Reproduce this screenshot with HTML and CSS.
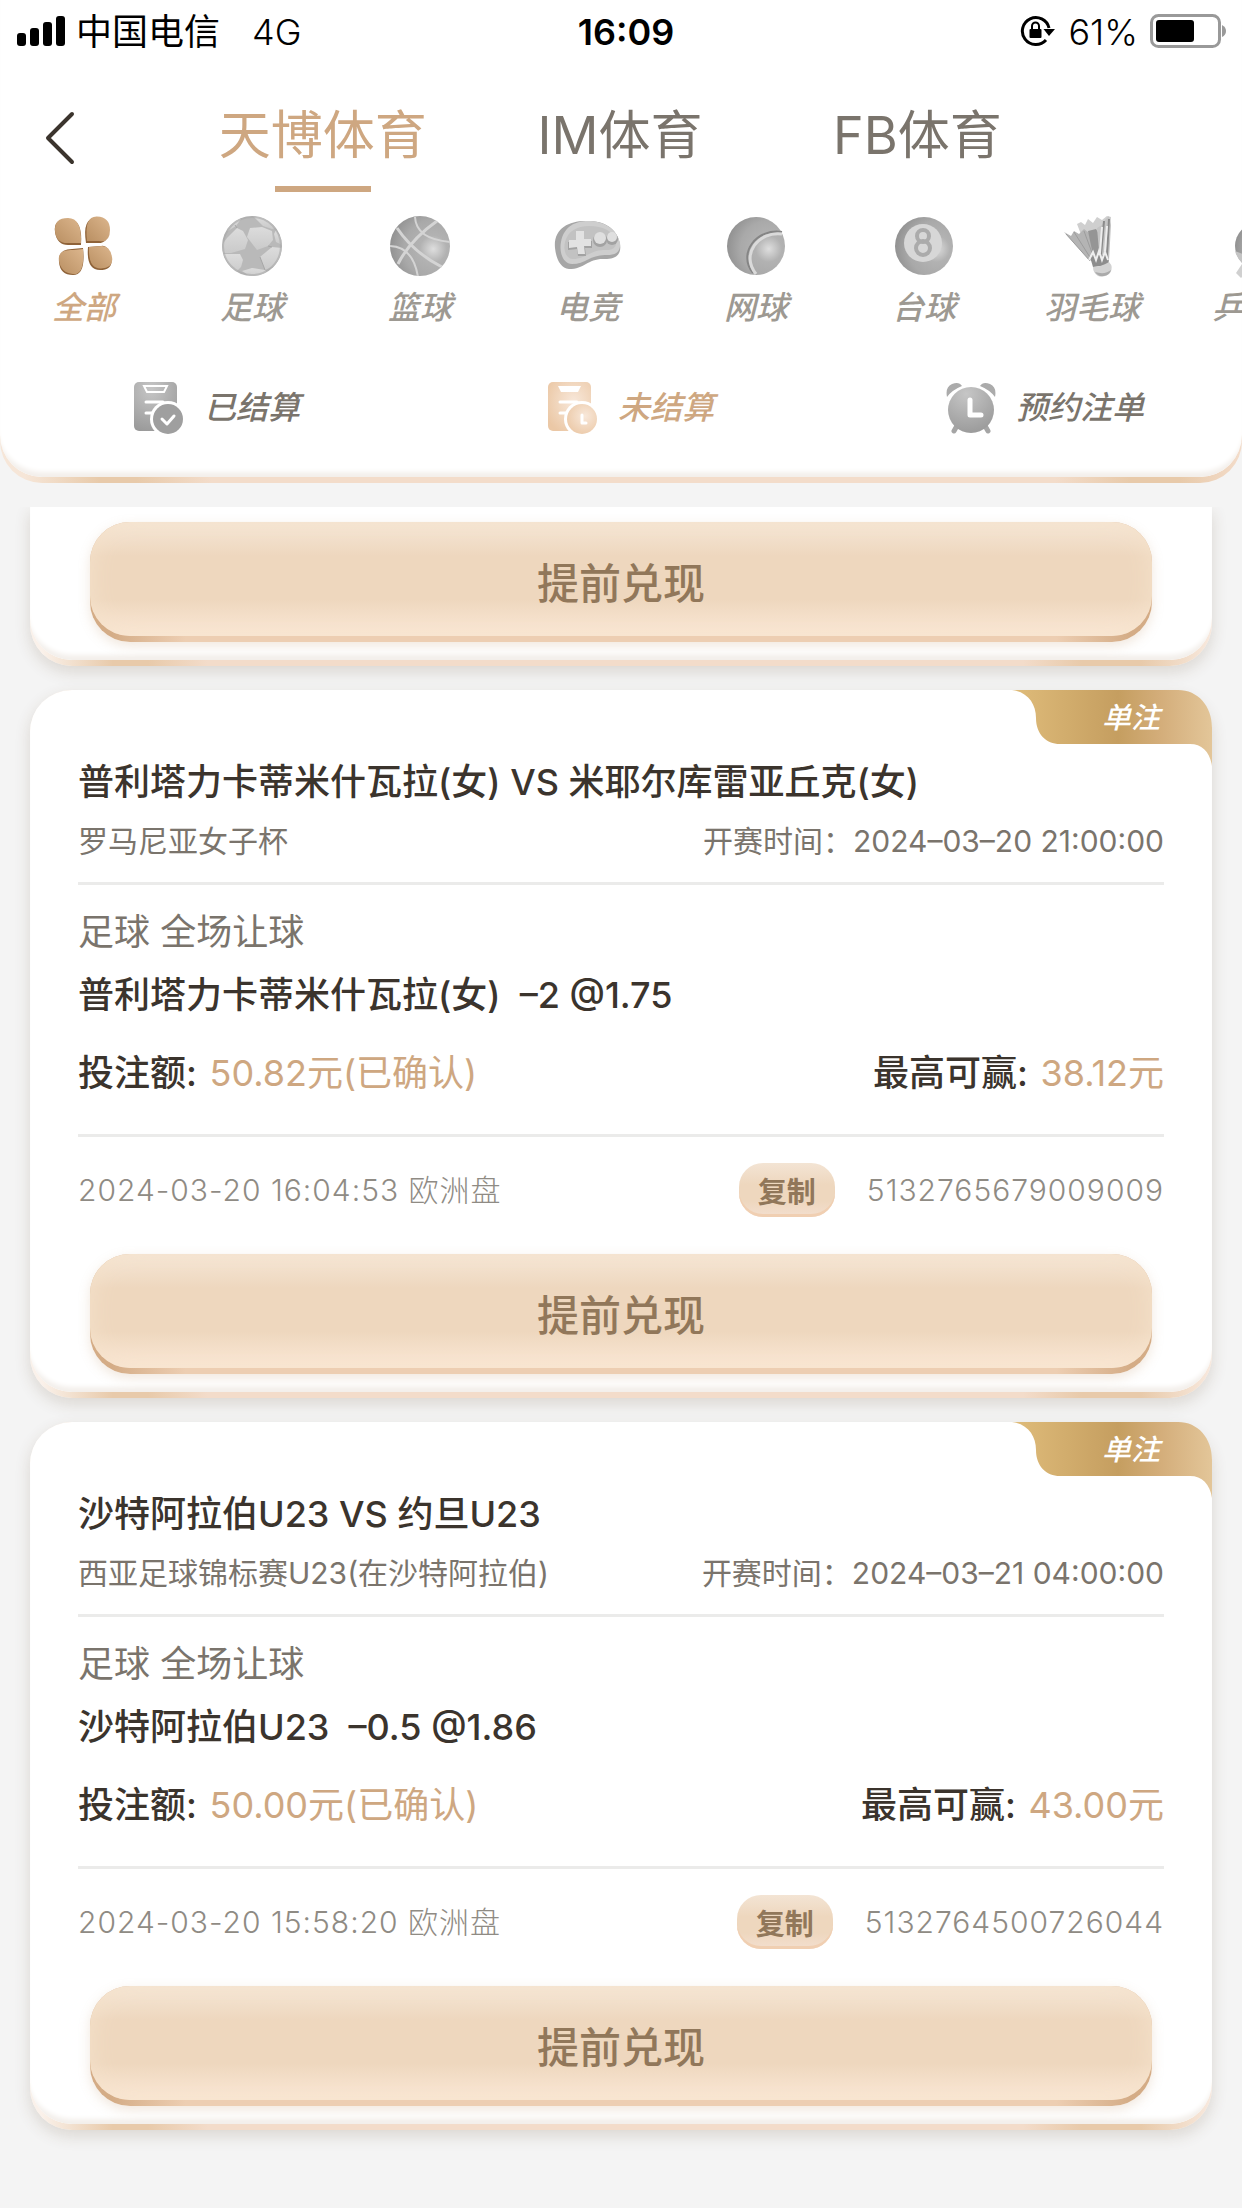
FILE: index.html
```html
<!DOCTYPE html>
<html lang="zh-CN">
<head>
    <meta charset="UTF-8">
    <meta name="viewport" content="width=device-width, initial-scale=1.0">
    <title>投注记录</title>
    <link rel="stylesheet" href="styles.css">
</head>
<body>
    <!-- Degradados compartidos por los iconos -->
    <svg class="defs" width="0" height="0" aria-hidden="true">
        <defs>
            <radialGradient id="ball" cx="0.72" cy="0.55" r="0.75">
                <stop offset="0" stop-color="#dedede"/>
                <stop offset="0.3" stop-color="#b2b2b2"/>
                <stop offset="0.65" stop-color="#a9a9a9"/>
                <stop offset="1" stop-color="#8f8f8f"/>
            </radialGradient>
            <linearGradient id="silver" x1="0" y1="0" x2="0" y2="1">
                <stop offset="0" stop-color="#dcdcdc"/>
                <stop offset="1" stop-color="#cacaca"/>
            </linearGradient>
            <linearGradient id="petal" x1="0" y1="1" x2="1" y2="0">
                <stop offset="0" stop-color="#b98f62"/>
                <stop offset="1" stop-color="#dcb68d"/>
            </linearGradient>
            <radialGradient id="grey" cx="0.4" cy="0.15" r="0.9">
                <stop offset="0" stop-color="#c6c6c6"/>
                <stop offset="1" stop-color="#999999"/>
            </radialGradient>
            <radialGradient id="peach" cx="0.6" cy="0.4" r="0.7">
                <stop offset="0" stop-color="#f8e8da"/>
                <stop offset="1" stop-color="#ebc8a6"/>
            </radialGradient>
            <linearGradient id="gold" x1="0" y1="0" x2="1" y2="0">
                <stop offset="0" stop-color="#dfbc7a"/>
                <stop offset="0.53" stop-color="#c59e60"/>
                <stop offset="0.75" stop-color="#d4ae7b"/>
                <stop offset="1" stop-color="#e3c699"/>
            </linearGradient>
            <clipPath id="circle"><circle cx="32" cy="32" r="30"/></clipPath>
        </defs>
    </svg>

    <header class="header">
        <div class="header-body">
            <div class="status">
                <div class="status-left">
                    <svg width="50" height="32" viewBox="0 0 50 32">
                        <rect x="1" y="18" width="9" height="13" rx="3"/>
                        <rect x="14" y="13" width="9" height="18" rx="3"/>
                        <rect x="27" y="7" width="9" height="24" rx="3"/>
                        <rect x="40" y="1" width="9" height="30" rx="3"/>
                    </svg>
                    <span>中国电信</span>
                    <span class="network">4G</span>
                </div>
                <b class="clock">16:09</b>
                <div class="status-right">
                    <svg width="36" height="34" viewBox="0 0 36 34">
                        <path d="M29 14A13.500 13.500 0 1 0 26 26" fill="none" stroke="#000" stroke-width="3"/>
                        <path d="M23.500 15H35L29 22z"/>
                        <rect x="9.500" y="15" width="12" height="9" rx="1"/>
                        <path d="M12 15v-3a3.500 3.500 0 0 1 7 0v3" fill="none" stroke="#000" stroke-width="2"/>
                    </svg>
                    <span class="percent">61%</span>
                    <svg width="76" height="36" viewBox="0 0 76 36">
                        <rect x="1.500" y="2.500" width="68" height="31" rx="7" fill="none" stroke="#999" stroke-width="3"/>
                        <rect x="6" y="7" width="38" height="22" rx="3"/>
                        <path d="M72 12q4 2 4 6t-4 6z" fill="#999"/>
                    </svg>
                </div>
            </div>

            <nav class="tabs">
                <a class="back" href="#" aria-label="返回">
                    <svg width="32" height="56" viewBox="0 0 32 56">
                        <path d="M28 4L4 28L28 52" fill="none" stroke="#3b342d" stroke-width="4" stroke-linecap="round" stroke-linejoin="round"/>
                    </svg>
                </a>
                <a class="tab active" href="#">天博体育</a>
                <a class="tab" href="#">IM体育</a>
                <a class="tab" href="#">FB体育</a>
            </nav>

            <nav class="sports">
                <a class="sport active" href="#">
                    <svg width="64" height="64" viewBox="0 0 64 64">
                        <g fill="#8f6339">
                            <path d="M29 31Q31 5 16 5T3 18t13 13z"/>
                            <path d="M34 29Q30 4 44 4t13 13-12 12z"/>
                            <path d="M31 34q3 27-10 27T7 48t13-13z"/>
                            <path d="M36 33q-2 23 12 23t11-13-10-11z"/>
                        </g>
                        <g fill="url(#petal)">
                            <path d="M29 29Q30 4 16 4T3 17t14 12z"/>
                            <path d="M35 27Q32 2 45 2.500T58 16 47 27z"/>
                            <path d="M31 35q2 26-10 25T7 47t14-11z"/>
                            <path d="M37 33q-1 22 12 21.500T60 43 50 32z"/>
                        </g>
                    </svg>
                    <span>全部</span>
                </a>
                <a class="sport" href="#">
                    <svg width="64" height="64" viewBox="0 0 64 64">
                        <g clip-path="url(#circle)">
                            <circle cx="32" cy="32" r="30" fill="#b9b9b9"/>
                            <g fill="url(#silver)">
                                <path d="M27 23L30 14L42 13L52 17L53 26L48 32L37 36z"/>
                                <path d="M7 24L17 14L23 17L28 26L25 35L11 39L3 39L2 31z"/>
                                <path d="M3 40H20L23 46L21 53L14 60z"/>
                                <path d="M40 43L52 33L62 34L60 45L54 52L45 56z"/>
                                <path d="M22 57L32 54L45 56L48 60L33 64z"/>
                                <path d="M5 14L15 4L21 5L16 12L8 17z"/>
                                <path d="M34 3H46L56 14L52 15L43 12z"/>
                                <path d="M56 16L62 26L62 31L56 28L54 20z"/>
                            </g>
                            <path d="M17 14l-2-3M48 32l4 1M40 43l5 13" stroke="#a6a6a6" stroke-width="1" fill="none"/>
                        </g>
                        <circle cx="32" cy="32" r="29" fill="none" stroke="#a8a8a8" stroke-width="2" opacity="0.6"/>
                    </svg>
                    <span>足球</span>
                </a>
                <a class="sport" href="#">
                    <svg width="64" height="64" viewBox="0 0 64 64">
                        <circle cx="32" cy="32" r="30" fill="url(#ball)"/>
                        <g clip-path="url(#circle)" fill="none" stroke="#d4d4d4" stroke-width="2">
                            <path d="M49 7Q22 26 10 50" stroke-width="3"/>
                            <path d="M9 14Q25 38 54 53" stroke-width="3"/>
                            <path d="M27 3q1 22 35 25"/>
                            <path d="M1 32q24 0 29 31"/>
                        </g>
                    </svg>
                    <span>篮球</span>
                </a>
                <a class="sport" href="#">
                    <svg width="68" height="64" viewBox="0 0 68 64">
                        <path d="M1 34C-1 14 16 6 34 7c16 0 29 7 32 23 2 12-6 15-15 15-17-1-20 10-36 10C6 54 2 44 1 34z" fill="#a6a6a6"/>
                        <path d="M7 28C10 12 22 7 34 7c16 0 29 8 32 22 1 9-5 12-13 12-16-1-21 9-35 9C9 50 5 38 7 28z" fill="#cecece"/>
                        <path d="M11 28c3-11 12-16 24-16 14 0 24 5 27 15 1 7-4 9-10 9-15-1-20 9-33 9-7 0-10-9-8-17z" fill="#c2c2c2"/>
                        <path d="M22 19h8v8h8v7h-7l1 8h-8l-1-7-9 1v-8h8z" fill="#a2a2a2"/>
                        <path d="M22 17h8v8h7v7h-7l1 8h-7l-1-7-8 1v-8h7z" fill="#e2e2e2"/>
                        <circle cx="46" cy="26" r="7" fill="#a2a2a2"/>
                        <circle cx="46" cy="24" r="6" fill="#dfdfdf"/>
                        <circle cx="58" cy="25" r="6" fill="#a2a2a2"/>
                        <circle cx="58" cy="23" r="5" fill="#dfdfdf"/>
                    </svg>
                    <span>电竞</span>
                </a>
                <a class="sport" href="#">
                    <svg width="64" height="64" viewBox="0 0 64 64">
                        <circle cx="32" cy="32" r="29" fill="url(#ball)"/>
                        <path d="M58 18C33 14 13 39 29 59" fill="none" stroke="#858585" stroke-width="2"/>
                        <path d="M58 20C35 17 16 40 32 60" fill="none" stroke="#dadada" stroke-width="3"/>
                    </svg>
                    <span>网球</span>
                </a>
                <a class="sport" href="#">
                    <svg width="64" height="64" viewBox="0 0 64 64">
                        <circle cx="32" cy="32" r="29" fill="url(#ball)"/>
                        <circle cx="31" cy="29" r="19" fill="#d7d7d7"/>
                        <circle cx="31" cy="22" r="6" fill="none" stroke="#ababab" stroke-width="4"/>
                        <circle cx="31" cy="34" r="7" fill="none" stroke="#ababab" stroke-width="4"/>
                    </svg>
                    <span>台球</span>
                </a>
                <a class="sport" href="#">
                    <svg width="64" height="64" viewBox="0 0 64 64">
                        <path d="M17 10l4-2 4 3 3-6 5 4 4-6 5 3 5-4 4 1-2 25-10 18-9-2z" fill="#cfcfcf"/>
                        <path d="M4 18l7 4 3-5 5 3 5-5 5 4 7-2-1 20 2 11-8-2z" fill="#b4b4b4"/>
                        <path d="M28 17l8-2 3 5 1 24-6 2z" fill="#959595"/>
                        <path d="M37 14l5-3 3-5 4-4 2 9-2 36-9 1z" fill="#c4c4c4"/>
                        <path d="M6 20l24 27M14 18l19 30M24 17l11 30" stroke="#9c9c9c" stroke-width="1" fill="none"/>
                        <path d="M44 7l-3 34M49 5l-2 36" stroke="#8a8a8a" stroke-width="2" fill="none"/>
                        <path d="M42 13l-2 26M47 12l-2 25" stroke="#ededed" stroke-width="2" fill="none"/>
                        <path d="M30 43l18-3 1 11-16 2z" fill="#8d8d8d"/>
                        <path d="M29 46l4-8 3 8 3-9 3 9 3-8 3 8" stroke="#eee" stroke-width="2" fill="none"/>
                        <path d="M33 53q8 0 16-5 5 5 1 11-5 5-12 3-5-3-5-9z" fill="#d2d2d2"/>
                        <path d="M35 58q3 5 9 4 6-1 7-6-6 5-16 2z" fill="#aaa"/>
                    </svg>
                    <span>羽毛球</span>
                </a>
                <a class="sport" href="#">
                    <svg width="64" height="64" viewBox="0 0 64 64">
                        <circle cx="30" cy="32" r="23" fill="url(#ball)"/>
                        <path d="M7 37q3 11 14 17l14-6z" fill="#c4c4c4"/>
                        <path d="M14 50l8 6-9 8-5-5z" fill="#d0d0d0"/>
                    </svg>
                    <span>乒乓球</span>
                </a>
            </nav>

            <div class="filters">
                <button class="filter" type="button">
                    <svg width="50" height="52" viewBox="0 0 50 52">
                        <rect x="0" y="0" width="43" height="49" rx="5" fill="url(#grey)"/>
                        <path d="M10 4h23l-3 6H13z" fill="none" stroke="#fff" stroke-width="2"/>
                        <path d="M12 20h17M12 31h6" stroke="#fff" stroke-width="3" stroke-linecap="round"/>
                        <circle cx="34" cy="37" r="18" fill="#fff"/>
                        <circle cx="34" cy="37" r="15" fill="#9f9f9f"/>
                        <path d="M28 37l5 5 7-8" fill="none" stroke="#fff" stroke-width="3" stroke-linecap="round" stroke-linejoin="round"/>
                    </svg>
                    <span>已结算</span>
                </button>
                <button class="filter active" type="button">
                    <svg width="50" height="52" viewBox="0 0 50 52">
                        <rect x="0" y="0" width="43" height="49" rx="5" fill="url(#peach)"/>
                        <path d="M10 4h23l-3 6H13z" fill="#fff"/>
                        <path d="M12 20h17M12 31h6" stroke="#fff" stroke-width="3" stroke-linecap="round"/>
                        <circle cx="34" cy="37" r="18" fill="#fff"/>
                        <circle cx="34" cy="37" r="15" fill="url(#peach)"/>
                        <path d="M34 33v8h4" fill="none" stroke="#fff" stroke-width="3" stroke-linecap="round" stroke-linejoin="round"/>
                    </svg>
                    <span>未结算</span>
                </button>
                <button class="filter" type="button">
                    <svg width="50" height="52" viewBox="0 0 50 52">
                        <path d="M1 15Q-1 5 6 2t10 2Q6 8 1 15zM49 15q2-10-5-13T34 4q10 4 15 11z" fill="#ababab"/>
                        <path d="M12 42l-4 7M38 42l4 7" stroke="#a5a5a5" stroke-width="5" stroke-linecap="round"/>
                        <circle cx="25" cy="28" r="23" fill="url(#grey)"/>
                        <path d="M24 18v15h11" fill="none" stroke="#fff" stroke-width="5" stroke-linecap="round" stroke-linejoin="round"/>
                    </svg>
                    <span>预约注单</span>
                </button>
            </div>
        </div>
    </header>

    <main class="list">
        <article class="card card-cut">
            <div class="card-body">
                <button class="cashout" type="button"><span>提前兑现</span></button>
            </div>
        </article>

        <article class="card">
            <div class="card-body">
                <div class="ribbon">
                    <svg width="200" height="76" viewBox="0 0 200 76">
                        <path d="M0 0C16 2 24 14 24 28C24 44 34 54 48 54H178C190 54 198 62 200 76V38C200 16 186 0 166 0z" fill="url(#gold)"/>
                    </svg>
                    <span>单注</span>
                </div>
                <h2>普利塔力卡蒂米什瓦拉(女) VS 米耶尔库雷亚丘克(女)</h2>
                <div class="row league">
                    <span>罗马尼亚女子杯</span>
                    <span>开赛时间：2024–03–20 21:00:00</span>
                </div>
                <div class="bet">
                    <p class="market">足球 全场让球</p>
                    <p class="pick">普利塔力卡蒂米什瓦拉(女)&nbsp; –2 @1.75</p>
                    <div class="row money">
                        <span>投注额: <em>50.82元(已确认)</em></span>
                        <span>最高可赢: <em>38.12元</em></span>
                    </div>
                </div>
                <div class="row order">
                    <span>2024-03-20 16:04:53 欧洲盘</span>
                    <span class="number"><button class="copy" type="button">复制</button>5132765679009009</span>
                </div>
                <button class="cashout" type="button"><span>提前兑现</span></button>
            </div>
        </article>

        <article class="card">
            <div class="card-body">
                <div class="ribbon">
                    <svg width="200" height="76" viewBox="0 0 200 76">
                        <path d="M0 0C16 2 24 14 24 28C24 44 34 54 48 54H178C190 54 198 62 200 76V38C200 16 186 0 166 0z" fill="url(#gold)"/>
                    </svg>
                    <span>单注</span>
                </div>
                <h2>沙特阿拉伯U23 VS 约旦U23</h2>
                <div class="row league">
                    <span>西亚足球锦标赛U23(在沙特阿拉伯)</span>
                    <span>开赛时间：2024–03–21 04:00:00</span>
                </div>
                <div class="bet">
                    <p class="market">足球 全场让球</p>
                    <p class="pick">沙特阿拉伯U23&nbsp; –0.5 @1.86</p>
                    <div class="row money">
                        <span>投注额: <em>50.00元(已确认)</em></span>
                        <span>最高可赢: <em>43.00元</em></span>
                    </div>
                </div>
                <div class="row order">
                    <span>2024-03-20 15:58:20 欧洲盘</span>
                    <span class="number"><button class="copy" type="button">复制</button>5132764500726044</span>
                </div>
                <button class="cashout" type="button"><span>提前兑现</span></button>
            </div>
        </article>
    </main>
</body>
</html>
```
FILE: styles.css
```css
* {
    box-sizing: border-box;
}

body {
    margin: 0;
    font-family: Inter, 'Noto Sans CJK SC', sans-serif;
    background-color: #f4f4f4;
    color: #3b342d;
}

a {
    text-decoration: none;
}

button {
    font-family: inherit;
    border: none;
    background: none;
    padding: 0;
    cursor: pointer;
}

svg {
    display: block;
    flex-shrink: 0;
}

.defs {
    position: absolute;
}

/* Cabecera */
.header {
    padding-bottom: 6px;
    border-radius: 0 0 42px 42px;
    background: linear-gradient(90deg, #f6e6d8 2%, #e8caaa 8%, #e8caaa 11%, #f3dcca 17%, #f3dcca 85%, #e8caaa 91%, #e8caaa 95%, #f3dcca);
}

.header-body {
    background-color: #fff;
    border-radius: 0 0 42px 42px;
    padding-bottom: 43px;
    box-shadow: inset 0 -8px 5px -3px #f3efeb;
}

.status {
    display: grid;
    grid-template-columns: 1fr auto 1fr;
    align-items: center;
    height: 60px;
    padding: 0 16px;
    font-size: 36px;
    line-height: 60px;
    color: #000;
}

.status span,
.clock {
    padding-top: 2px;
}

.status-left {
    display: flex;
    align-items: center;
    gap: 10px;
    font-weight: 400;
}

.network {
    margin-left: 22px;
    font-weight: 300;
}

.percent {
    font-weight: 300;
}

.clock {
    font-weight: 600;
    padding-left: 10px;
}

.status-right {
    display: flex;
    align-items: center;
    justify-content: flex-end;
    gap: 12px;
}

.tabs {
    display: flex;
    padding-right: 176px;
}

.back {
    width: 174px;
    padding: 50px 0 0 44px;
}

.tab {
    flex: 1;
    display: flex;
    flex-direction: column;
    align-items: center;
    gap: 12px;
    padding-top: 38px;
    font-size: 52px;
    font-weight: 400;
    line-height: 76px;
    color: #7a746c;
}

.tab::after {
    content: "";
    width: 96px;
    height: 6px;
}

.tab.active {
    color: #cea781;
}

.tab.active::after {
    background-color: #cea781;
}

.sports {
    display: flex;
    padding-top: 22px;
    overflow: hidden;
}

.sport {
    flex: 0 0 168px;
    display: flex;
    flex-direction: column;
    align-items: center;
    gap: 10px;
    font-size: 32px;
    font-weight: 500;
    font-style: italic;
    line-height: 40px;
    color: #9d9992;
}

.sport.active {
    color: #cea781;
}

.filters {
    display: flex;
    padding-top: 54px;
}

.filter {
    flex: 1;
    display: flex;
    align-items: center;
    justify-content: center;
    gap: 20px;
    padding-left: 20px;
    font-size: 32px;
    font-weight: 500;
    font-style: italic;
    line-height: 52px;
    color: #7a746c;
}

.filter.active {
    color: #cea781;
}

/* Lista de apuestas */
.list {
    display: flex;
    flex-direction: column;
    gap: 24px;
    margin-top: 24px;
    padding: 0 30px 78px;
    overflow: hidden;
}

.card {
    padding-bottom: 6px;
    border-radius: 42px;
    background: linear-gradient(90deg, #faf1ea 1%, #e8caaa 7%, #e8caaa 10%, #f3dcca 15%, #f3dcca 84%, #e8caaa 89%, #e8caaa 94%, #f8e9de);
    box-shadow: 0 6px 16px rgba(90, 65, 30, 0.16);
}

.card-body {
    position: relative;
    background-color: #fff;
    border-radius: 42px;
    padding: 66px 48px 18px;
    box-shadow: inset 0 -8px 5px -3px #f3efeb;
}

.card-cut,
.card-cut .card-body {
    border-top-left-radius: 0;
    border-top-right-radius: 0;
}

.card-cut .card-body {
    padding-top: 15px;
}

.ribbon {
    position: absolute;
    top: 0;
    right: 0;
}

.ribbon span {
    position: absolute;
    top: 0;
    right: 52px;
    color: #fff;
    font-size: 29px;
    font-weight: 500;
    font-style: italic;
    line-height: 56px;
}

h2 {
    margin: 0;
    font-size: 36px;
    font-weight: 500;
    line-height: 52px;
}

.row {
    display: flex;
    justify-content: space-between;
    align-items: center;
}

.league {
    margin-top: 13px;
    padding-bottom: 21px;
    border-bottom: 3px solid #ebebea;
    font-size: 30px;
    line-height: 40px;
    color: #7a746c;
}

.bet {
    padding: 21px 0 36px;
    border-bottom: 3px solid #ebebea;
    font-size: 36px;
    font-weight: 500;
    line-height: 50px;
}

.market {
    margin: 0 0 12px;
    font-weight: 400;
    line-height: 52px;
    color: #7a746c;
}

.pick {
    margin: 0;
}

.money {
    margin-top: 28px;
}

.money em {
    margin-left: 3px;
    font-style: normal;
    font-weight: 400;
    color: #cea781;
}

.order {
    padding-top: 26px;
    font-size: 30px;
    font-weight: 300;
    letter-spacing: 1px;
    line-height: 54px;
    color: #8f8b84;
}

.number {
    display: flex;
    align-items: center;
    gap: 32px;
}

.copy {
    width: 96px;
    height: 54px;
    border-radius: 24px;
    background: linear-gradient(#f3e4d4, #eed7be 40%, #eed7be 70%, #f3dfcf);
    box-shadow: inset 0 -3px 0 #f0cfb2;
    color: #91775a;
    font-size: 29px;
    font-weight: 700;
}

.cashout {
    display: block;
    width: calc(100% - 24px);
    margin: 37px 12px 0;
    padding-bottom: 6px;
    border-radius: 40px;
    background: linear-gradient(90deg, #d4ac86 2%, #edceb2 9%, #edceb2 91%, #d4ac86 98%);
    box-shadow: 0 4px 12px rgba(200, 160, 120, 0.25);
}

.cashout span {
    display: block;
    padding-top: 10px;
    border-radius: 40px;
    background: linear-gradient(#f5e6d6, #eed7be 30%, #eed7be 68%, #fbe8d6);
    box-shadow: inset 0 0 24px #f5e2cb;
    color: #91775a;
    font-size: 42px;
    font-weight: 500;
    line-height: 104px;
}

.card-cut .cashout {
    margin-top: 0;
}
```
